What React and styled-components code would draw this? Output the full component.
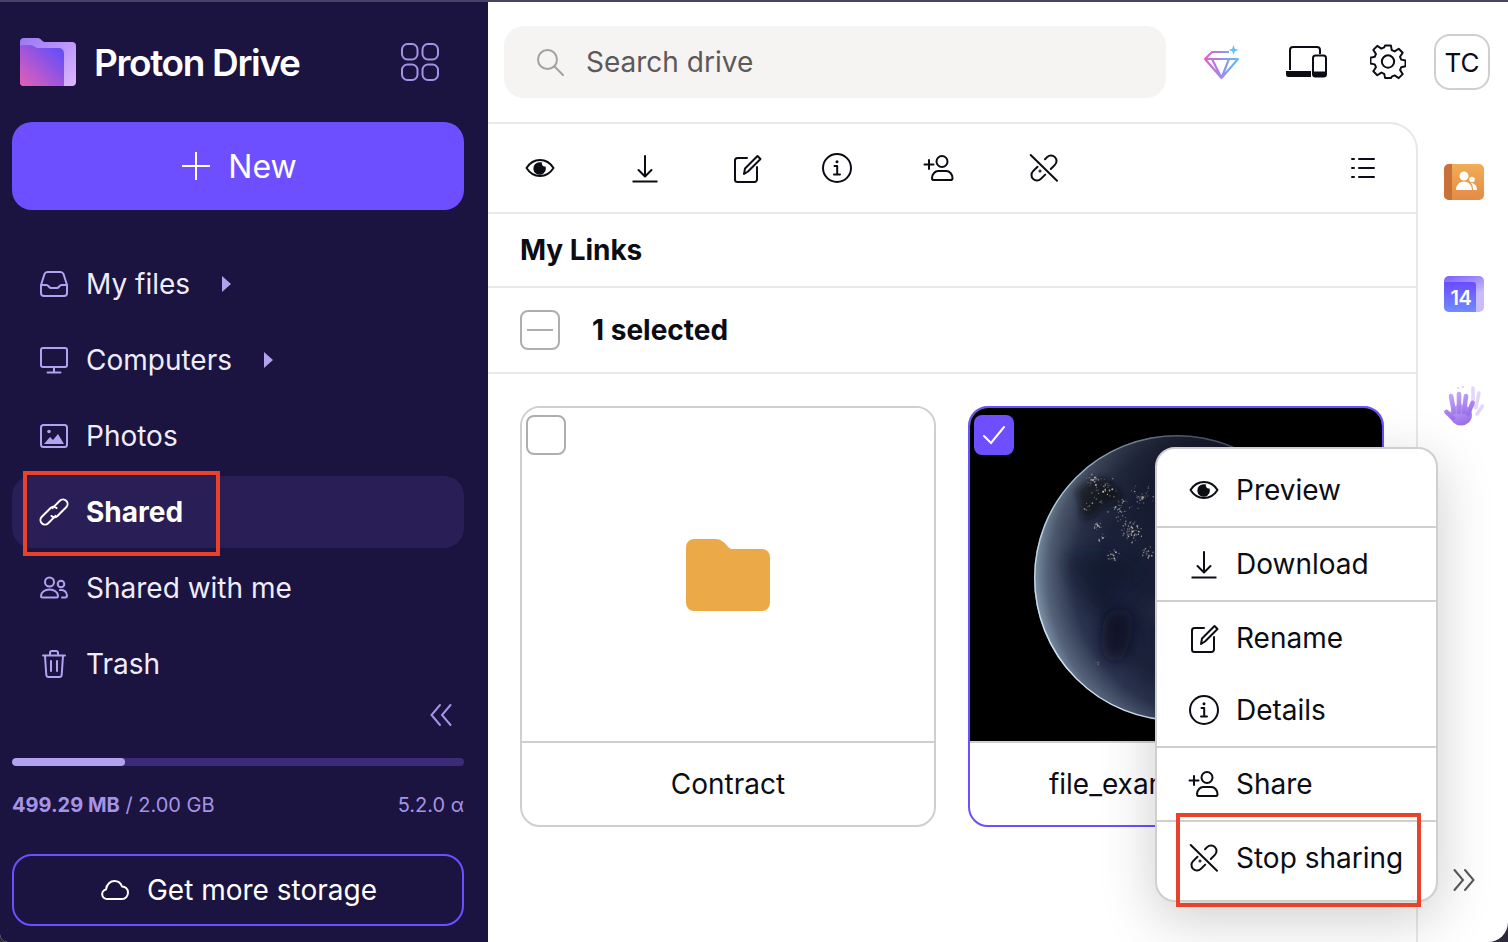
import React from "react";
import styled, { createGlobalStyle } from "styled-components";

const Global = createGlobalStyle`
  html, body { margin: 0; padding: 0; background: #2e2a3c; }
  body { font-family: Inter, "Liberation Sans", sans-serif; }
  * { box-sizing: border-box; }
`;

const Frame = styled.div`
  position: relative; width: 1508px; height: 942px; overflow: hidden;
  display: flex; background: #fff; border-top: 2px solid #4b4068;
  border-radius: 0 0 20px 8px; color: #0c0c14; font-size: 28px;
`;
const Sidebar = styled.aside`
  width: 488px; flex: none; background: #1b1340; color: #fff;
  padding: 0 24px 0 12px; display: flex; flex-direction: column;
`;
const Brand = styled.div`
  height: 120px; display: flex; align-items: center; padding: 0 0 0 8px;
  svg.grid { margin-left: auto; margin-right: 25px; }
`;
const BrandName = styled.span`
  font-size: 37px; font-weight: 600; letter-spacing: -1.35px; margin-left: 18px; line-height: 1;
`;
const NewButton = styled.button`
  height: 88px; border: 0; border-radius: 20px; background: #6d4fff; color: #fff;
  display: flex; align-items: center; justify-content: center; gap: 18px;
  font: 400 32px Inter, sans-serif; flex: none; padding: 0 0 0 3px;
`;
const Nav = styled.nav`
  margin-top: 38px; display: flex; flex-direction: column; gap: 4px;
`;
const NavRow = styled.div`
  height: 72px; border-radius: 20px; display: flex; align-items: center;
  padding-left: 26px; gap: 16px; font-weight: ${p => (p.$active ? 700 : 400)};
  background: ${p => (p.$active ? "#2a1e56" : "transparent")};
  color: ${p => (p.$active ? "#fff" : "#efecfb")};
  svg.ico { color: ${p => (p.$active ? "#fff" : "#b3a2f0")}; flex: none; }
`;
const Caret = styled.span`
  width: 0; height: 0; margin-left: 16px; border-left: 9px solid #b3a2f0;
  border-top: 8px solid transparent; border-bottom: 8px solid transparent;
`;
const Collapse = styled.div`
  height: 28px; display: flex; justify-content: flex-end; align-items: flex-end;
  padding-right: 12px; color: #a594e6;
`;
const Track = styled.div`
  height: 8px; border-radius: 4px; background: #3b2b78; margin-top: 30px; overflow: hidden; flex: none;
`;
const Fill = styled.div`
  height: 100%; background: #b3a2f0; border-radius: 4px;
`;
const Meta = styled.div`
  display: flex; justify-content: space-between; align-items: center;
  margin-top: 26px; height: 26px; color: #a594e6; font-size: 20px;
  b { font-weight: 700; }
`;
const StorageButton = styled.button`
  margin-top: 36px; height: 72px; flex: none; border: 2px solid #6d4fff; border-radius: 20px; background: transparent;
  color: #fff; font: 400 28px Inter, sans-serif; display: flex; align-items: center;
  justify-content: center; gap: 18px; padding: 0 0 0 2px;
`;
const Main = styled.main`
  flex: 1; min-width: 0; display: flex; flex-direction: column;
`;
const TopBar = styled.header`
  height: 120px; flex: none; display: flex; align-items: center; padding: 0 18px 0 16px;
`;
const Search = styled.div`
  width: 662px; height: 72px; background: #f5f4f2; border-radius: 20px; display: flex;
  align-items: center; padding-left: 32px; gap: 22px; color: #5c5958;
  svg { color: #a3a19f; }
`;
const TopIcon = styled.div`
  width: ${p => p.$w}px; display: flex; justify-content: center; align-items: center; flex: none;
`;
const TopIcons = styled.div`
  display: flex; align-items: center; margin-left: 14px;
`;
const Avatar = styled.div`
  width: 56px; height: 56px; border: 2px solid #d1cfcd; border-radius: 16px; margin-left: 6px;
  display: flex; align-items: center; justify-content: center; font-size: 26px; flex: none;
`;
const Body = styled.div`
  flex: 1; display: flex; min-height: 0;
`;
const Panel = styled.section`
  width: 930px; flex: none; border-top: 2px solid #eae7e4; border-right: 2px solid #eae7e4;
  border-top-right-radius: 28px; display: flex; flex-direction: column;
`;
const Toolbar = styled.div`
  height: 90px; flex: none; display: flex; align-items: center; padding: 0 16px; border-bottom: 2px solid #eae7e4;
`;
const ToolButton = styled.div`
  width: ${p => p.$w}px; display: flex; justify-content: center; flex: none;
  margin-left: ${p => (p.$end ? "auto" : 0)};
`;
const Heading = styled.div`
  height: 74px; flex: none; display: flex; align-items: center; padding-left: 32px;
  font-weight: 700; border-bottom: 2px solid #eae7e4; letter-spacing: -.05px;
`;
const SelectionRow = styled.div`
  height: 86px; flex: none; display: flex; align-items: center; padding-left: 32px; gap: 32px;
  font-weight: 700; border-bottom: 2px solid #eae7e4;
`;
const Check = styled.span`
  width: 40px; height: 40px; border-radius: 8px; flex: none; display: flex; align-items: center; justify-content: center;
  border: ${p => (p.$on ? "0" : "2px solid #b0aeac")}; background: ${p => (p.$on ? "#6d4fff" : "#fff")};
`;
const Dash = styled.span`
  width: 26px; height: 2px; background: #b0aeac;
`;
const Grid = styled.div`
  display: grid; grid-template-columns: 416px 416px; gap: 32px; padding: 32px 0 0 32px;
`;
const Card = styled.article`
  position: relative; height: 421px; border: 2px solid ${p => (p.$on ? "#6d4fff" : "#d1cfcd")}; border-radius: 20px;
  display: flex; flex-direction: column; overflow: hidden;
`;
const Thumb = styled.div`
  height: 335px; flex: none; display: flex; align-items: center; justify-content: center;
  background: ${p => (p.$dark ? "#000" : "#fff")}; border-bottom: 2px solid #d1cfcd;
`;
const CardCheck = styled.div`
  position: absolute; left: 4px; top: 7px;
`;
const CardLabel = styled.div`
  flex: 1; display: flex; align-items: center; justify-content: center; white-space: nowrap;
`;
const Rail = styled.aside`
  flex: 1; display: flex; flex-direction: column; align-items: center; padding: 42px 0 49px 2px; gap: 76px; color: #5c5958;
  > :last-child { margin-top: auto; }
`;
const CalendarTile = styled.div`
  position: relative; width: 40px; height: 36px; border-radius: 5px; overflow: hidden; flex: none;
  background: linear-gradient(160deg, #7a5fff, #c9bcfc 60%);
`;
const CalendarFace = styled.div`
  position: absolute; inset: 6px 8px 0 0; border-radius: 0 3px 0 0;
  background: linear-gradient(180deg, #6a4cff, #6f8cff);
  color: #fff; font-size: 20px; font-weight: 600; display: flex; align-items: center; justify-content: center;
  padding: 2px 0 0 2px; letter-spacing: -.5px;
`;
const Menu = styled.div`
  position: absolute; left: 1155px; top: 445px; width: 283px; height: 455px; background: #fff;
  border: 2px solid #d1cfcd; border-radius: 20px; padding: 5px 0 0; z-index: 3;
  box-shadow: 0 16px 56px rgba(0,0,0,.2);
`;
const MenuRow = styled.div`
  height: ${p => (p.$divider ? 74 : 72)}px; display: flex; align-items: center; padding-left: 31px; gap: 16px;
  border-top: ${p => (p.$divider ? "2px solid #d1cfcd" : "0")};
  white-space: nowrap;
`;
const Callout = styled.div`
  position: absolute; left: ${p => p.$x}px; top: ${p => p.$y}px; width: ${p => p.$w}px; height: ${p => p.$h}px;
  border: 4px solid #e8432a; z-index: 4; pointer-events: none;
`;

const I = ({ children, s = 32, fill = "none", w = 2, cls = "ico" }) => (
  <svg className={cls} width={s} height={s} viewBox="0 0 32 32" fill={fill} stroke="currentColor" strokeWidth={w} strokeLinecap="round" strokeLinejoin="round">{children}</svg>
);

const Eye = () => (
  <I w={2}>
    <path d="M2.500 16C6 10.500 10.500 8 16 8s10 2.500 13.500 8C26 21.500 21.500 24 16 24S6 21.500 2.500 16Z" />
    <path fill="currentColor" stroke="none" d="M16 10.200c.7 0 1.400.1 2 .4a2.800 2.800 0 0 0 3.500 3.700 6.300 6.300 0 1 1-5.500-4.100Z" />
  </I>
);
const Download = () => (
  <I w={2}><path d="M16 4v20M9.500 18l6.500 6.500L22.500 18" /><path d="M3.500 29.500h25" strokeLinecap="butt" /></I>
);
const Rename = () => (
  <I w={2}>
    <path d="M16 6H6.500A2.500 2.500 0 0 0 4 8.500v19A2.500 2.500 0 0 0 6.500 30h17a2.500 2.500 0 0 0 2.500-2.500V15" />
    <path d="M13 22l1-5.500L26.500 4l3 3L17 19.500Z" />
  </I>
);
const Info = () => (
  <I w={2}>
    <circle cx="16" cy="16" r="14" />
    <circle cx="16" cy="9.800" r="1.500" fill="currentColor" stroke="none" />
    <path d="M13.500 14h2.700v8M13 22.500h6" />
  </I>
);
const AddUser = () => (
  <I w={2}>
    <circle cx="19" cy="9.500" r="5.500" />
    <path d="M9 26.200c0-4.200 3.400-7.200 6-7.200h8.500c2.800 0 6 3 6 7.200 0 1-.7 1.800-1.800 1.800H10.800C9.700 28 9 27.200 9 26.200Z" />
    <path d="M1.500 12.500h9M6 8v9" />
  </I>
);
const Unlink = () => (
  <I w={2}>
    <path d="M2.700 3L29 28.700" />
    <path d="M17 7.200L19.100 5.100A5.500 5.500 0 0 1 26.900 12.900L22.800 17" />
    <path d="M9.500 14.700L5.100 19.100A5.500 5.500 0 0 0 12.900 26.900L17.200 22.600" />
    <circle cx="12" cy="19" r=".5" fill="currentColor" />
  </I>
);

const clusters = [
  [123, 72, 7, 26, "#e7c9d8"], [135, 82, 14, 44, "#d8d4c8"], [128, 118, 4, 18, "#fff"], [132, 130, 5, 8, "#c8c4b8"],
  [162, 124, 11, 70, "#f2e8c8"], [150, 102, 14, 40, "#cfc8b8"], [143, 146, 7, 24, "#d8d0b8"],
  [172, 88, 13, 44, "#c8c4b8"], [118, 98, 6, 10, "#b8b4a8"], [176, 145, 8, 22, "#e0d8c0"], [127, 255, 4, 6, "#8a8a80"],
];

const Earth = () => {
  const lights = [];
  let seed = 11;
  const rnd = () => ((seed = (seed * 16807) % 2147483647) / 2147483647);
  clusters.forEach(([cx, cy, sp, n, col]) => {
    for (let k = 0; k < n; k++) {
      const a = rnd() * Math.PI * 2;
      const d = rnd() * sp;
      lights.push([cx + Math.cos(a) * d, cy + Math.sin(a) * d, 0.35 + rnd() * 0.6, 0.25 + rnd() * 0.55, col]);
    }
  });
  return (
    <svg width="412" height="333" viewBox="0 0 412 333">
      <defs>
        <radialGradient id="globe" cx="0.62" cy="0.5" r="0.62">
          <stop offset="0" stopColor="#1c2340" />
          <stop offset="0.62" stopColor="#1e2540" />
          <stop offset="0.78" stopColor="#2c3550" />
          <stop offset="0.92" stopColor="#56647a" />
          <stop offset="1" stopColor="#8299ae" />
        </radialGradient>
        <linearGradient id="shade" x1="0.1" y1="0.7" x2="0.6" y2="0">
          <stop offset="0" stopColor="#10121f" stopOpacity="0" />
          <stop offset="0.55" stopColor="#10121f" stopOpacity=".25" />
          <stop offset="1" stopColor="#10121f" stopOpacity=".8" />
        </linearGradient>
        <linearGradient id="rim" x1="0.2" y1="0.9" x2="0.7" y2="0">
          <stop offset="0" stopColor="#d0e6f2" />
          <stop offset="0.6" stopColor="#a9c4d8" />
          <stop offset="1" stopColor="#6a7482" stopOpacity=".5" />
        </linearGradient>
        <filter id="soft" x="-40%" y="-40%" width="180%" height="180%"><feGaussianBlur stdDeviation="7" /></filter>
        <filter id="softer" x="-30%" y="-30%" width="160%" height="160%"><feGaussianBlur stdDeviation="3" /></filter>
      </defs>
      <circle cx="207" cy="170" r="143" fill="url(#globe)" />
      <circle cx="207" cy="170" r="143" fill="url(#shade)" />
      <circle cx="207" cy="170" r="142.300" fill="none" stroke="url(#rim)" strokeWidth="1.400" />
      <path filter="url(#softer)" fill="#07080f" opacity=".6" d="M106 84c8-10 20-16 30-14 6 8 12 8 16 18-6 10-18 8-22 14-6 8-14 12-20 6 2-8-2-16-4-24Z" />
      <path filter="url(#soft)" fill="#10162a" opacity=".55" d="M94 150c14-6 38-8 50-2 14 4 26 10 24 24-14 6-22 12-30 28-10 8-20-2-24-14-8-10-18-20-20-36Z" />
      <path filter="url(#soft)" fill="#0b1020" opacity=".7" d="M136 208c10-10 22-10 26 2 2 16-4 30-10 42-10 4-18-2-20-12 0-12 0-22 4-32Z" />
      <path filter="url(#soft)" fill="#2a3248" opacity=".6" d="M176 196c6-6 18-4 20 4 0 10-10 18-18 14-4-6-4-12-2-18Z" />
      {lights.map((l, k) => <circle key={k} cx={l[0]} cy={l[1]} r={l[2]} fill={l[4]} opacity={l[3]} />)}
    </svg>
  );
};

const Gem = () => (
  <svg width="40" height="40" viewBox="0 0 40 40" fill="none" strokeWidth="2.200" strokeLinejoin="round">
    <defs>
      <linearGradient id="gem" x1="0" y1="0" x2="1" y2="0">
        <stop offset="0" stopColor="#e35fc4" /><stop offset=".5" stopColor="#9a8cf0" /><stop offset="1" stopColor="#5bc3f5" />
      </linearGradient>
    </defs>
    <path stroke="url(#gem)" d="M27 10H10l-7 7 16.500 19L36 17h-33M10 17l9.500 19L27 17" />
    <path fill="#5bc3f5" d="M31.500 3l1.300 3.700 3.700 1.300-3.700 1.300-1.300 3.700-1.300-3.700L26.500 8l3.700-1.300Z" />
  </svg>
);

const Hand = () => (
  <svg width="40" height="40" viewBox="0 0 40 40" fill="none" strokeLinecap="round" style={{ marginTop: -2 }}>
    <defs><linearGradient id="hd" x1="0" y1="0" x2="0.4" y2="1"><stop offset="0" stopColor="#c9abf6" /><stop offset="1" stopColor="#9a70ea" /></linearGradient></defs>
    <path stroke="#e3d6fb" strokeWidth="3.500" d="M29 2L29 20M35 7L32 22M38.500 20L33 28" />
    <circle cx="14" cy="2" r="1" fill="#d9c8f8" /><circle cx="19" cy="1" r="1" fill="#d9c8f8" />
    <ellipse cx="17" cy="29" rx="11" ry="10.500" fill="url(#hd)" />
    <path stroke="url(#hd)" strokeWidth="4.600" d="M7 10L10 26M15 8L15 26M22 10L20 26M28.500 17L24 28M2.500 26L9 32" />
  </svg>
);

export default function App() {
  return (
    <Frame>
      <Global />
      <Sidebar>
        <Brand>
          <svg width="56" height="48" viewBox="0 0 56 48">
            <defs>
              <linearGradient id="fb" x1="0" y1="0" x2="1" y2="1"><stop offset="0" stopColor="#9a78f5" /><stop offset="1" stopColor="#dcb8ff" /></linearGradient>
              <linearGradient id="ff" x1="1" y1="0" x2="0" y2="1"><stop offset="0.15" stopColor="#6b4ff5" /><stop offset="1" stopColor="#e65fb5" /></linearGradient>
            </defs>
            <path fill="url(#fb)" d="M0 4a4 4 0 0 1 4-4h13c2 0 3 .5 4.500 2s2 2 4 2H52a4 4 0 0 1 4 4v36a4 4 0 0 1-4 4H4a4 4 0 0 1-4-4Z" />
            <path fill="url(#ff)" d="M0 9a2 2 0 0 1 2-2h8c2 0 3 .5 4.500 1.500s2.500 1.500 4.500 1.500h20a5 5 0 0 1 5 5v33H4a4 4 0 0 1-4-4Z" />
          </svg>
          <BrandName>Proton Drive</BrandName>
          <svg className="grid" width="38" height="38" viewBox="0 0 38 38" fill="none" stroke="#a594e6" strokeWidth="2">
            <rect x="1" y="1" width="15.500" height="15.500" rx="5.500" /><rect x="21.500" y="1" width="15.500" height="15.500" rx="5.500" />
            <rect x="1" y="21.500" width="15.500" height="15.500" rx="5.500" /><rect x="21.500" y="21.500" width="15.500" height="15.500" rx="5.500" />
          </svg>
        </Brand>
        <NewButton>
          <svg width="28" height="28" viewBox="0 0 28 28" stroke="#fff" strokeWidth="2"><path d="M14 0v28M0 14h28" /></svg>
          New
        </NewButton>
        <Nav>
          <NavRow>
            <I><path d="M3 17l3.500-11A3.500 3.500 0 0 1 10 4h12a3.500 3.500 0 0 1 3.500 2L29 17v8a3 3 0 0 1-3 3H6a3 3 0 0 1-3-3Z" /><path d="M3 17h5.500c2 0 2.500 3 4.500 3h6c2 0 2.500-3 4.500-3H29" /></I>
            My files<Caret />
          </NavRow>
          <NavRow>
            <I><rect x="3" y="4" width="26" height="19" rx="2" /><path d="M16 23v5M9.500 28.500h13" /></I>
            Computers<Caret />
          </NavRow>
          <NavRow>
            <I><rect x="3" y="5" width="26" height="22" rx="2.500" /><circle cx="11" cy="11.500" r="1.800" fill="currentColor" stroke="none" /><path fill="currentColor" stroke="none" d="M6 24l6-7 3 3 5-6 6 10Z" /></I>
            Photos
          </NavRow>
          <NavRow $active>
            <I><path d="M14.500 14.100L21.800 6.800A4.500 4.500 0 0 1 28.200 13.200L19.200 22.200A4.500 4.500 0 0 1 13.500 22" transform="translate(0 -2)" /><path d="M17.500 17.900L10.200 25.200A4.500 4.500 0 0 1 3.800 18.800L12.800 9.800A4.500 4.500 0 0 1 18.500 10" transform="translate(0 2)" /></I>
            Shared
          </NavRow>
          <NavRow>
            <I><circle cx="11.500" cy="10" r="4.500" /><circle cx="23" cy="12" r="3.300" /><path d="M3 24c0-4 4-6.500 8.500-6.500S20 20 20 24c0 .8-.5 1.500-1.500 1.500h-14C3.500 25.500 3 24.800 3 24Z" /><path d="M22 18c3.500-.5 7 1.500 7 5.500 0 1.200-.6 2-1.700 2H24" /></I>
            Shared with me
          </NavRow>
          <NavRow>
            <I><path d="M5 7.500h22M12 7V5a2 2 0 0 1 2-2h4a2 2 0 0 1 2 2v2M7 8l1.300 19a2.200 2.200 0 0 0 2.200 2h11a2.200 2.200 0 0 0 2.200-2L25 8M13 13v10M19 13v10" /></I>
            Trash
          </NavRow>
        </Nav>
        <Collapse>
          <svg width="22" height="26" viewBox="0 0 22 26" fill="none" stroke="currentColor" strokeWidth="2" strokeLinecap="round"><path d="M10 3L1.500 13l8.500 10M20.500 3L12 13l8.500 10" /></svg>
        </Collapse>
        <Track><Fill style={{ width: "25%" }} /></Track>
        <Meta><span><b>499.29 MB</b> / 2.00 GB</span><span>5.2.0 α</span></Meta>
        <StorageButton>
          <svg width="28" height="20" viewBox="0 0 28 20" fill="none" stroke="#fff" strokeWidth="2" strokeLinejoin="round"><path d="M6 19a4.800 4.800 0 0 1-1-9.500C5.500 4 9.500 1 13.500 1c4 0 6.500 2.500 7.500 5.500 3.500.2 6 2.500 6 6 0 3.500-2.500 6.500-6 6.500Z" /></svg>
          Get more storage
        </StorageButton>
      </Sidebar>
      <Main>
        <TopBar>
          <Search>
            <svg width="28" height="28" viewBox="0 0 28 28" fill="none" stroke="currentColor" strokeWidth="2" strokeLinecap="round"><circle cx="11.500" cy="11.500" r="9.500" /><path d="M18.500 18.500L27 27" /></svg>
            Search drive
          </Search>
          <TopIcons>
            <TopIcon $w="84"><Gem /></TopIcon>
            <TopIcon $w="84">
              <svg width="42" height="32" viewBox="0 0 42 32" fill="none" stroke="#0c0c14" strokeWidth="2">
                <path d="M5 24V4a3 3 0 0 1 3-3h24a3 3 0 0 1 3 3v4" />
                <path fill="#0c0c14" stroke="none" d="M1 25h25v6H3a2.500 2.500 0 0 1-2-2.500Z" />
                <rect x="28" y="9.500" width="13" height="21" rx="2.500" />
                <path strokeWidth="5" d="M28.500 28h12" />
              </svg>
            </TopIcon>
            <TopIcon $w="80">
              <svg width="36" height="36" viewBox="0 0 38 38" fill="none" stroke="#0c0c14" strokeWidth="2.100" strokeLinejoin="round">
                <path d="M16 2h6l1 5 3 1.300 4.300-2.800 4.200 4.200L31.700 14l1.300 3 4.500 1v6l-4.500 1-1.300 3 2.800 4.300-4.200 4.200L26 33.700l-3 1.300-1 1.500h-6l-1-4.500-3-1.300-4.300 2.800-4.200-4.200L6.300 25 5 22l-4.500-1v-6L5 14l1.300-3L3.500 6.700l4.200-4.200L12 5.300 15 4Z" transform="translate(0 -.500)" />
                <circle cx="19" cy="18.500" r="6.500" />
              </svg>
            </TopIcon>
            <Avatar>TC</Avatar>
          </TopIcons>
        </TopBar>
        <Body>
          <Panel>
            <Toolbar>
              <ToolButton $w="72"><Eye /></ToolButton>
              <ToolButton $w="138"><Download /></ToolButton>
              <ToolButton $w="66"><Rename /></ToolButton>
              <ToolButton $w="114"><Info /></ToolButton>
              <ToolButton $w="90"><AddUser /></ToolButton>
              <ToolButton $w="120"><Unlink /></ToolButton>
              <ToolButton $w="72" $end>
                <I><path d="M11 7h15M11 16h15M11 25h15M4 7h2M4 16h2M4 25h2" /></I>
              </ToolButton>
            </Toolbar>
            <Heading>My Links</Heading>
            <SelectionRow><Check><Dash /></Check>1 selected</SelectionRow>
            <Grid>
              <Card>
                <Thumb>
                  <svg width="84" height="72" viewBox="0 0 84 72"><path fill="#ebaa47" d="M0 8a8 8 0 0 1 8-8h21c4 0 6 1 9 3.500S43 10 46 10h30a8 8 0 0 1 8 8v46a8 8 0 0 1-8 8H8a8 8 0 0 1-8-8Z" /></svg>
                </Thumb>
                <CardCheck><Check /></CardCheck>
                <CardLabel>Contract</CardLabel>
              </Card>
              <Card $on>
                <Thumb $dark><Earth /></Thumb>
                <CardCheck>
                  <Check $on>
                    <svg width="24" height="20" viewBox="0 0 24 20" fill="none" stroke="#fff" strokeWidth="2" strokeLinecap="round"><path d="M2 11l7 7L22 2" /></svg>
                  </Check>
                </CardCheck>
                <CardLabel>file_example_01.jpg</CardLabel>
              </Card>
            </Grid>
          </Panel>
          <Rail>
            <svg width="40" height="36" viewBox="0 0 40 36">
              <defs><linearGradient id="ct" x1="0" y1="0" x2="0" y2="1"><stop offset="0" stopColor="#f2ad55" /><stop offset="1" stopColor="#e38a47" /></linearGradient></defs>
              <rect width="40" height="36" rx="5" fill="url(#ct)" />
              <path fill="#c9703a" d="M5 0h3v36H5a5 5 0 0 1-5-5V5a5 5 0 0 1 5-5Z" />
              <circle cx="20" cy="12" r="4.500" fill="#fff" /><circle cx="28" cy="15.500" r="2.800" fill="#fff" />
              <path fill="#fff" d="M12 26c0-5 3.500-8.500 8-8.500s8 3.500 8 8.500ZM27 19c3 0 6 2.500 6 7h-4c0-3-.5-5-2-7Z" />
            </svg>
            <CalendarTile><CalendarFace>14</CalendarFace></CalendarTile>
            <Hand />
            <svg width="22" height="26" viewBox="0 0 22 26" fill="none" stroke="currentColor" strokeWidth="2" strokeLinecap="round"><path d="M1.500 3L10 13l-8.500 10M12 3l8.500 10L12 23" /></svg>
          </Rail>
        </Body>
      </Main>
      <Menu>
        <MenuRow><Eye />Preview</MenuRow>
        <MenuRow $divider><Download />Download</MenuRow>
        <MenuRow $divider><Rename />Rename</MenuRow>
        <MenuRow><Info />Details</MenuRow>
        <MenuRow $divider><AddUser />Share</MenuRow>
        <MenuRow $divider><Unlink />Stop sharing</MenuRow>
      </Menu>
      <Callout $x={23} $y={469} $w={197} $h={85} />
      <Callout $x={1176} $y={811} $w={245} $h={94} />
    </Frame>
  );
}
